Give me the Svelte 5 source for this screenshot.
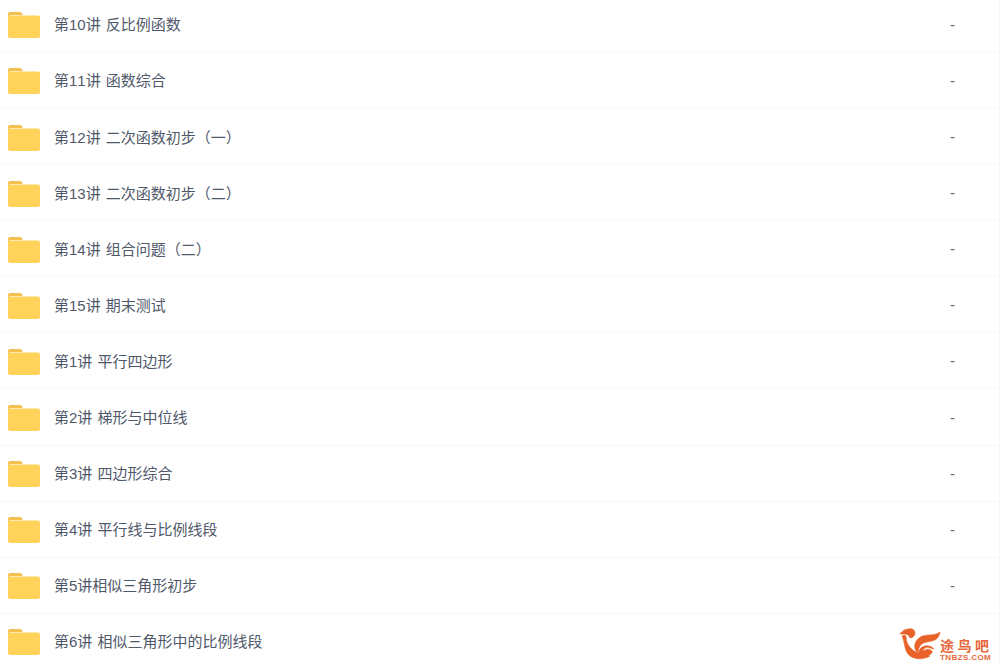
<script lang="ts">
  const rows = [
    "第10讲 反比例函数",
    "第11讲 函数综合",
    "第12讲 二次函数初步（一）",
    "第13讲 二次函数初步（二）",
    "第14讲 组合问题（二）",
    "第15讲 期末测试",
    "第1讲 平行四边形",
    "第2讲 梯形与中位线",
    "第3讲 四边形综合",
    "第4讲 平行线与比例线段",
    "第5讲相似三角形初步",
    "第6讲 相似三角形中的比例线段",
  ];
</script>

<main class="page">
  <ul class="list">
    {#each rows as name, i}
      <li class="row">
        <svg class="folder" viewBox="0 0 32 26" width="32" height="26" aria-hidden="true">
          <path d="M0 2a2 2 0 0 1 2-2h10a2 2 0 0 1 1.600.8L15 3H2L0 5z" fill="#f2c04f" />
          <path d="M0 3.500h30a2 2 0 0 1 2 2V24a2 2 0 0 1-2 2H2a2 2 0 0 1-2-2z" fill="#ffd259" />
        </svg>
        <span class="name">{name}</span>
        <!-- the watermark hides the last row's dash -->
        {#if i < rows.length - 1}
          <span class="size">-</span>
        {/if}
      </li>
    {/each}
  </ul>

  <div class="mark">
    <svg viewBox="0 0 46 38" width="46" height="38" aria-hidden="true">
      <g fill="#e8622a" stroke="#e8622a" stroke-width="0.6" stroke-linejoin="round">
        <path d="M5 9c2-3 5-5 9-5 3-1 6 1 6 4 0 3-3 5-5 5-1-3-3-4-5-4z" />
        <path d="M7 11c2-1 3-1 4 0 0 8 5 18 24 20-7 4-17 4-22-2-4-5-3-12-6-18z" />
        <path d="M45 7c-1 8-7 9-13 10-6 1-9 5-9 11-5-4-4-11 1-15 6-5 15-1 21-6z" />
        <path d="M39 24c-4-5-13-4-15 2-1 4 3 6 8 5 3-1 6-3 5-5l-4-2-5 2c0-2 4-5 7-3z" />
      </g>
    </svg>
    <div class="mark-text">
      <span class="mark-cn">途鸟吧</span>
      <span class="mark-en">TNBZS.COM</span>
    </div>
  </div>
</main>

<style>
  :global(body) {
    margin: 0;
    background: #fff;
  }

  .page {
    position: relative;
    width: 1000px;
    height: 666px;
    overflow: hidden;
    box-sizing: border-box;
    border-right: 1px solid #f6f6f6;
    font-family: "Liberation Sans", "Noto Sans CJK SC", sans-serif;
  }

  .list {
    list-style: none;
    margin: -3.200px 0 0;
    padding: 0;
  }

  .row {
    display: flex;
    align-items: center;
    box-sizing: border-box;
    height: 56.100px;
    padding-left: 8px;
    border-bottom: 1px solid #f7f7f7;
  }

  .folder {
    flex: none;
    margin-top: 2px;
  }

  .name {
    flex: 1;
    margin-left: 14px;
    margin-top: -1px;
    font-size: 15px;
    font-kerning: none;
    word-spacing: 1px;
    color: #50596a;
    white-space: nowrap;
  }

  .size {
    width: 49px;
    font-size: 15px;
    color: #666;
  }

  .mark {
    position: absolute;
    left: 895px;
    top: 625px;
    display: flex;
  }

  .mark-text {
    display: flex;
    flex-direction: column;
    width: 50px;
    margin-top: 14px;
    color: #e8673a;
    line-height: 1;
    white-space: nowrap;
  }

  .mark-cn {
    font-size: 14px;
    font-weight: 700;
    letter-spacing: 3.500px;
    margin-left: -1px;
  }

  .mark-en {
    font-size: 8px;
    font-weight: 700;
    margin-top: 1px;
    margin-left: -1px;
    letter-spacing: 0.4px;
  }
</style>
